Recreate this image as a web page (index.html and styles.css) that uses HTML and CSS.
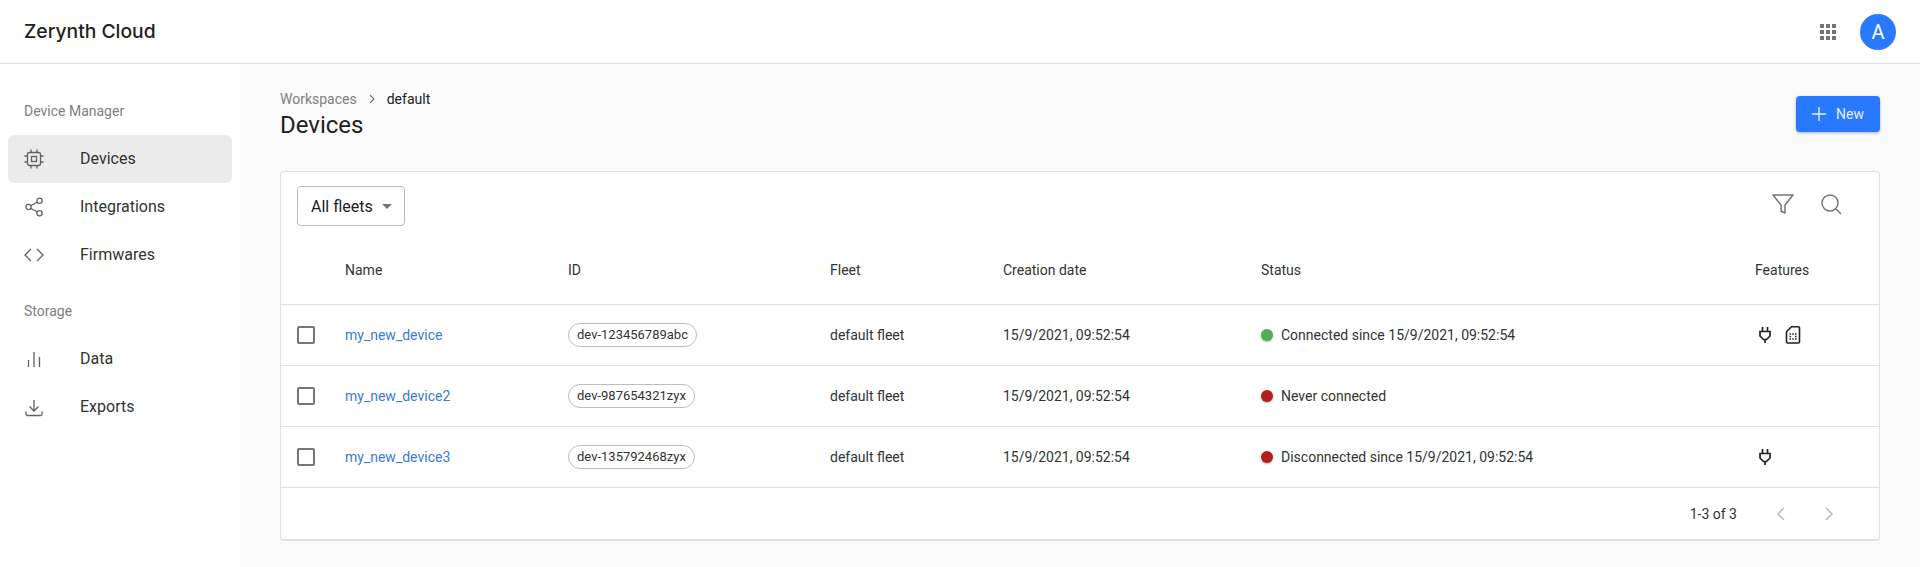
FILE: index.html
```html
<!DOCTYPE html>
<html lang="en">
<head>
    <meta charset="UTF-8">
    <title>Zerynth Cloud</title>
    <link rel="stylesheet" href="styles.css">
</head>
<body>
    <header class="topbar">
        <div class="logo">Zerynth Cloud</div>
        <div class="topbar-right">
            <svg class="apps" width="16" height="16" viewBox="0 0 16 16" fill="#757575">
                <rect x="0" y="0" width="4" height="4"/><rect x="6" y="0" width="4" height="4"/><rect x="12" y="0" width="4" height="4"/>
                <rect x="0" y="6" width="4" height="4"/><rect x="6" y="6" width="4" height="4"/><rect x="12" y="6" width="4" height="4"/>
                <rect x="0" y="12" width="4" height="4"/><rect x="6" y="12" width="4" height="4"/><rect x="12" y="12" width="4" height="4"/>
            </svg>
            <div class="avatar">A</div>
        </div>
    </header>

    <div class="layout">
        <nav class="sidebar">
            <div class="nav-label">Device Manager</div>
            <a class="nav-item active" href="#">
                <svg class="nav-icon" viewBox="0 0 24 24" fill="none" stroke="#616161" stroke-width="1.3">
                    <rect x="5.5" y="5.5" width="13" height="13" rx="2"/>
                    <rect x="9.5" y="9.5" width="5" height="5"/>
                    <path d="M9 2.5v3M15 2.5v3M9 18.5v3M15 18.5v3M2.5 9h3M2.5 15h3M18.5 9h3M18.5 15h3"/>
                </svg>
                Devices
            </a>
            <a class="nav-item" href="#">
                <svg class="nav-icon" viewBox="0 0 24 24" fill="none" stroke="#616161" stroke-width="1.3">
                    <circle cx="6.5" cy="12" r="2.6"/><circle cx="17.5" cy="5.8" r="2.6"/><circle cx="17.5" cy="18.2" r="2.6"/>
                    <path d="M8.8 10.8l6.4-3.8M8.8 13.2l6.4 3.8"/>
                </svg>
                Integrations
            </a>
            <a class="nav-item" href="#">
                <svg class="nav-icon" viewBox="0 0 24 24" fill="none" stroke="#616161" stroke-width="1.3">
                    <path d="M9 6l-6 6 6 6M15 6l6 6-6 6"/>
                </svg>
                Firmwares
            </a>
            <div class="nav-label second">Storage</div>
            <a class="nav-item" href="#">
                <svg class="nav-icon" viewBox="0 0 24 24" fill="none" stroke="#616161" stroke-width="1.3">
                    <path d="M6.5 13v7M12 5v15M17.5 10v10"/>
                </svg>
                Data
            </a>
            <a class="nav-item" href="#">
                <svg class="nav-icon" viewBox="0 0 24 24" fill="none" stroke="#616161" stroke-width="1.3">
                    <path d="M12 5v11M7.5 11.5l4.5 4.5 4.5-4.5M4 16.5V19a1.5 1.5 0 0 0 1.5 1.5h13A1.5 1.5 0 0 0 20 19v-2.5"/>
                </svg>
                Exports
            </a>
        </nav>

        <main class="content">
            <div class="page-head">
                <div>
                    <div class="breadcrumb">
                        <span class="crumb">Workspaces</span>
                        <svg class="crumb-sep" width="8" height="10" viewBox="0 0 8 10" fill="none" stroke="#757575" stroke-width="1.1"><path d="M2 1l4 4-4 4"/></svg>
                        <span>default</span>
                    </div>
                    <h1>Devices</h1>
                </div>
                <button class="btn-new" type="button">
                    <svg width="14" height="14" viewBox="0 0 14 14" stroke="#e3eeff" stroke-width="1.4"><path d="M7 0v14M0 7h14"/></svg>
                    New
                </button>
            </div>

            <section class="card">
                <div class="toolbar">
                    <div class="select">All fleets <span class="caret"></span></div>
                    <div class="tools">
                        <svg width="24" height="24" viewBox="0 0 24 24" fill="none" stroke="#757575" stroke-width="1.5">
                            <path d="M2 3h20l-8 10v8l-4-2v-6z" stroke-linejoin="round"/>
                        </svg>
                        <svg width="24" height="24" viewBox="0 0 24 24" fill="none" stroke="#757575" stroke-width="1.5">
                            <circle cx="11" cy="11" r="8"/><path d="M17 17l5 5"/>
                        </svg>
                    </div>
                </div>

                <div class="row head">
                    <div></div>
                    <div>Name</div>
                    <div>ID</div>
                    <div>Fleet</div>
                    <div>Creation date</div>
                    <div>Status</div>
                    <div>Features</div>
                </div>

                <div class="row">
                    <div><span class="check"></span></div>
                    <div><a href="#" class="dev-link">my_new_device</a></div>
                    <div><span class="chip">dev-123456789abc</span></div>
                    <div>default fleet</div>
                    <div>15/9/2021, 09:52:54</div>
                    <div class="status"><span class="dot green"></span>Connected since 15/9/2021, 09:52:54</div>
                    <div class="features">
                        <svg width="24" height="24" viewBox="0 0 24 24" fill="none" stroke="#212121" stroke-width="1.7"><path d="M9.5 4v4.5M14.5 4v4.5M7 8.5h10v4.5l-3.5 3.5h-3L7 13zM12 16.5V20"/></svg>
                        <svg width="24" height="24" viewBox="0 0 24 24" fill="none" stroke="#212121" stroke-width="1.6"><path d="M10.5 3.8h6.7A1.3 1.3 0 0 1 18.5 5.1v13.6a1.3 1.3 0 0 1-1.3 1.3H6.8a1.3 1.3 0 0 1-1.3-1.3V8.8z"/><path d="M8.5 11h1.5M11.2 11h1.5M14 11h1.5M8.5 13.5h1.5M14 13.5h1.5M8.5 16h1.5M11.2 16h1.5M14 16h1.5" stroke-width="1.4"/></svg>
                    </div>
                </div>

                <div class="row">
                    <div><span class="check"></span></div>
                    <div><a href="#" class="dev-link">my_new_device2</a></div>
                    <div><span class="chip">dev-987654321zyx</span></div>
                    <div>default fleet</div>
                    <div>15/9/2021, 09:52:54</div>
                    <div class="status"><span class="dot red"></span>Never connected</div>
                    <div class="features"></div>
                </div>

                <div class="row">
                    <div><span class="check"></span></div>
                    <div><a href="#" class="dev-link">my_new_device3</a></div>
                    <div><span class="chip">dev-135792468zyx</span></div>
                    <div>default fleet</div>
                    <div>15/9/2021, 09:52:54</div>
                    <div class="status"><span class="dot red"></span>Disconnected since 15/9/2021, 09:52:54</div>
                    <div class="features">
                        <svg width="24" height="24" viewBox="0 0 24 24" fill="none" stroke="#212121" stroke-width="1.7"><path d="M9.5 4v4.5M14.5 4v4.5M7 8.5h10v4.5l-3.5 3.5h-3L7 13zM12 16.5V20"/></svg>
                    </div>
                </div>

                <div class="pager">
                    <span>1-3 of 3</span>
                    <svg class="pager-first" width="10" height="14" viewBox="0 0 10 14" fill="none" stroke="#bdbdbd" stroke-width="1.6"><path d="M8 1L2 7l6 6"/></svg>
                    <svg width="10" height="14" viewBox="0 0 10 14" fill="none" stroke="#bdbdbd" stroke-width="1.6"><path d="M2 1l6 6-6 6"/></svg>
                </div>
            </section>
        </main>
    </div>
</body>
</html>
```

FILE: styles.css
```css
* {
    box-sizing: border-box;
}

body {
    margin: 0;
    height: 567px;
    overflow: hidden;
    font-family: Roboto, "Liberation Sans", sans-serif;
    color: #212121;
    background-color: #fafafa;
}

a {
    text-decoration: none;
    color: inherit;
}

.topbar {
    height: 64px;
    background-color: #fff;
    border-bottom: 1px solid #dedede;
    display: flex;
    align-items: center;
    justify-content: space-between;
    padding: 0 24px;
}

.logo {
    font-family: Inter, sans-serif;
    font-size: 19.3px;
    font-weight: 500;
    color: #212121;
    margin-bottom: 1px;
}

.topbar-right {
    display: flex;
    align-items: center;
    gap: 24px;
}

.avatar {
    width: 36px;
    height: 36px;
    border-radius: 50%;
    background-color: #2979ff;
    color: #fff;
    font-size: 20px;
    display: flex;
    align-items: center;
    justify-content: center;
}

.layout {
    display: flex;
    height: 503px;
}

.sidebar {
    width: 240px;
    background-color: #fff;
    padding: 38px 8px 0;
}

.nav-label {
    font-size: 14px;
    color: #808080;
    line-height: 18px;
    padding-left: 16px;
    margin-bottom: 15px;
}

.nav-label.second {
    margin-top: 23px;
}

.nav-item {
    display: flex;
    align-items: center;
    height: 48px;
    padding: 0 0 1px 14px;
    border-radius: 6px;
    font-size: 16px;
    color: #333;
}

.nav-item.active {
    background-color: #ebebeb;
}

.nav-icon {
    width: 24px;
    height: 24px;
    margin-right: 34px;
}

.content {
    flex: 1;
    padding: 26px 40px 0;
}

.page-head {
    display: flex;
    justify-content: space-between;
    align-items: flex-start;
    height: 81px;
}

.breadcrumb {
    display: flex;
    align-items: center;
    font-size: 14px;
    line-height: 18px;
    height: 18px;
}

.crumb {
    color: #808080;
}

.crumb-sep {
    margin: 0 11px 0 11px;
}

h1 {
    margin: 2px 0 0;
    font-size: 24px;
    font-weight: 400;
    line-height: 30px;
}

.btn-new {
    width: 84px;
    height: 36px;
    margin-top: 6px;
    border: none;
    border-radius: 4px;
    background-color: #2979ff;
    color: #e3eeff;
    font-family: inherit;
    font-size: 14px;
    display: flex;
    align-items: center;
    justify-content: center;
    gap: 10px;
    box-shadow: 0 1px 3px rgba(0, 0, 0, 0.3);
}

.card {
    background-color: #fff;
    border: 1px solid #e0e0e0;
    border-bottom-width: 2px;
    border-radius: 4px;
    height: 370px;
}

.toolbar {
    display: flex;
    align-items: center;
    justify-content: space-between;
    padding: 14px 36px 0 16px;
}

.select {
    width: 108px;
    height: 40px;
    border: 1px solid #bdbdbd;
    border-radius: 4px;
    font-size: 16px;
    padding-left: 13px;
    display: flex;
    align-items: center;
    gap: 9px;
}

.caret {
    width: 0;
    height: 0;
    border-left: 5px solid transparent;
    border-right: 5px solid transparent;
    border-top: 5px solid #757575;
}

.tools {
    display: flex;
    gap: 24px;
    margin-top: -5px;
}

.row {
    display: grid;
    grid-template-columns: 64px 223px 262px 173px 258px 494px 1fr;
    align-items: center;
    height: 61px;
    border-bottom: 1px solid #e0e0e0;
    font-size: 14px;
    color: #333;
}

.row > div:first-child {
    padding-left: 16px;
    display: flex;
}

.row.head {
    height: 79px;
    padding-top: 10px;
}

.check {
    width: 18px;
    height: 18px;
    border: 2px solid #757575;
    border-radius: 2px;
}

.dev-link {
    color: #3a7bd9;
}

.chip {
    display: inline-block;
    height: 24px;
    line-height: 22px;
    border: 1px solid #bdbdbd;
    border-radius: 12px;
    padding: 0 8px;
    font-size: 13px;
}

.status {
    display: flex;
    align-items: center;
}

.dot {
    width: 12px;
    height: 12px;
    border-radius: 50%;
    margin: 0 8px 0 0;
    box-shadow: 0 1px 2px rgba(0, 0, 0, 0.3);
}

.dot.green {
    background-color: #4caf50;
}

.dot.red {
    background-color: #b71c1c;
}

.features {
    display: flex;
    gap: 4px;
    margin-left: -2px;
}

.pager {
    display: flex;
    align-items: center;
    justify-content: flex-end;
    height: 51px;
    font-size: 14px;
    color: #333;
    padding-right: 45px;
    gap: 38px;
}

.pager-first {
    margin-left: 1px;
}
```
